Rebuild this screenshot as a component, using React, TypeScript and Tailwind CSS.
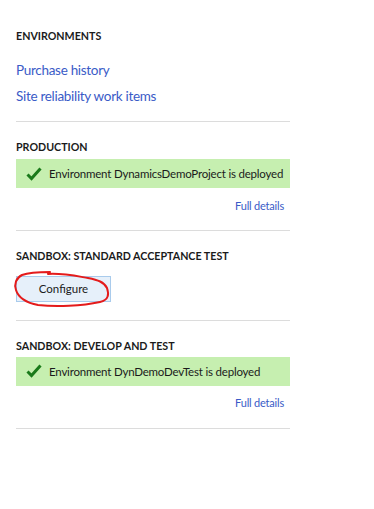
import { memo } from "react";

const font = { fontFamily: '"Segoe UI", Lato, "Open Sans", sans-serif' };

function CheckIcon() {
    return (
        <svg width="16" height="14" viewBox="0 0 16 14" className="shrink-0">
            <path d="M1.5 7.5 L5.5 11.5 L14.5 1.5" fill="none" stroke="#1a7a1a" strokeWidth="3" strokeLinecap="butt" />
        </svg>
    );
}

const Heading = ({ children }: { children: string }) => (
    <div className="text-[10.7px] font-bold leading-[14px] text-[#1b1b1b]">{children}</div>
);

const DeployedBanner = ({ name, className }: { name: string; className: string }) => (
    <div
        className={`flex h-[29px] items-center gap-[7px] whitespace-nowrap bg-[#c6efb0] pl-[10px] text-[11.5px] tracking-[-0.2px] text-[#1b1b1b] ${className}`}
    >
        <CheckIcon />
        <span>Environment {name} is deployed</span>
    </div>
);

const FullDetails = ({ className }: { className: string }) => (
    <div className={`flex justify-end pr-[6px] text-[11px] leading-[14px] tracking-[-0.2px] text-[#3a5bc7] ${className}`}>
        <a>Full details</a>
    </div>
);

const Divider = () => <div className="h-px bg-[#dcdcdc]" />;

export default memo(function App() {
    return (
        <div className="h-[509px] w-[374px] bg-white" style={font}>
            <div className="w-[290px] pl-4">
                <div className="pt-[29px]">
                    <Heading>ENVIRONMENTS</Heading>
                </div>
                <div className="mt-[18px] flex flex-col gap-[8px] text-[13.5px] leading-[18px] tracking-[-0.3px] text-[#3a5bc7]">
                    <a>Purchase history</a>
                    <a>Site reliability work items</a>
                </div>
                <div className="mt-[16px]">
                    <Divider />
                </div>

                {/* Production */}
                <div className="pt-[18px] pb-[17px]">
                    <Heading>PRODUCTION</Heading>
                    <DeployedBanner name="DynamicsDemoProject" className="mt-[5px]" />
                    <FullDetails className="mt-[11px]" />
                </div>
                <Divider />

                {/* Standard acceptance test */}
                <div className="pt-[18px] pb-[18px]">
                    <Heading>SANDBOX: STANDARD ACCEPTANCE TEST</Heading>
                    <div className="relative mt-[12px] w-[95px]">
                        <button className="h-[26px] w-[95px] border border-[#a9cbec] bg-[#e6f0fa] text-[11.5px] text-[#1b1b1b]">
                            Configure
                        </button>
                        <svg
                            className="pointer-events-none absolute left-[-4px] top-[-6px]"
                            width="100"
                            height="40"
                            viewBox="0 0 100 40"
                        >
                            <path
                                d="M38 3 C30 3 18 3 10 6 C4 9 2 15 4 21 C6 28 14 34 26 36 C44 38 70 37 88 33 C97 31 97 25 95 19 C92 13 86 11 76 9 C64 7 50 4 36 5"
                                fill="none"
                                stroke="#e41b1b"
                                strokeWidth="2"
                                strokeLinecap="round"
                            />
                        </svg>
                    </div>
                </div>
                <Divider />

                {/* Develop and test */}
                <div className="pt-[18px] pb-[18px]">
                    <Heading>SANDBOX: DEVELOP AND TEST</Heading>
                    <DeployedBanner name="DynDemoDevTest" className="mt-[4px]" />
                    <FullDetails className="mt-[10px]" />
                </div>
                <Divider />
            </div>
        </div>
    );
});
